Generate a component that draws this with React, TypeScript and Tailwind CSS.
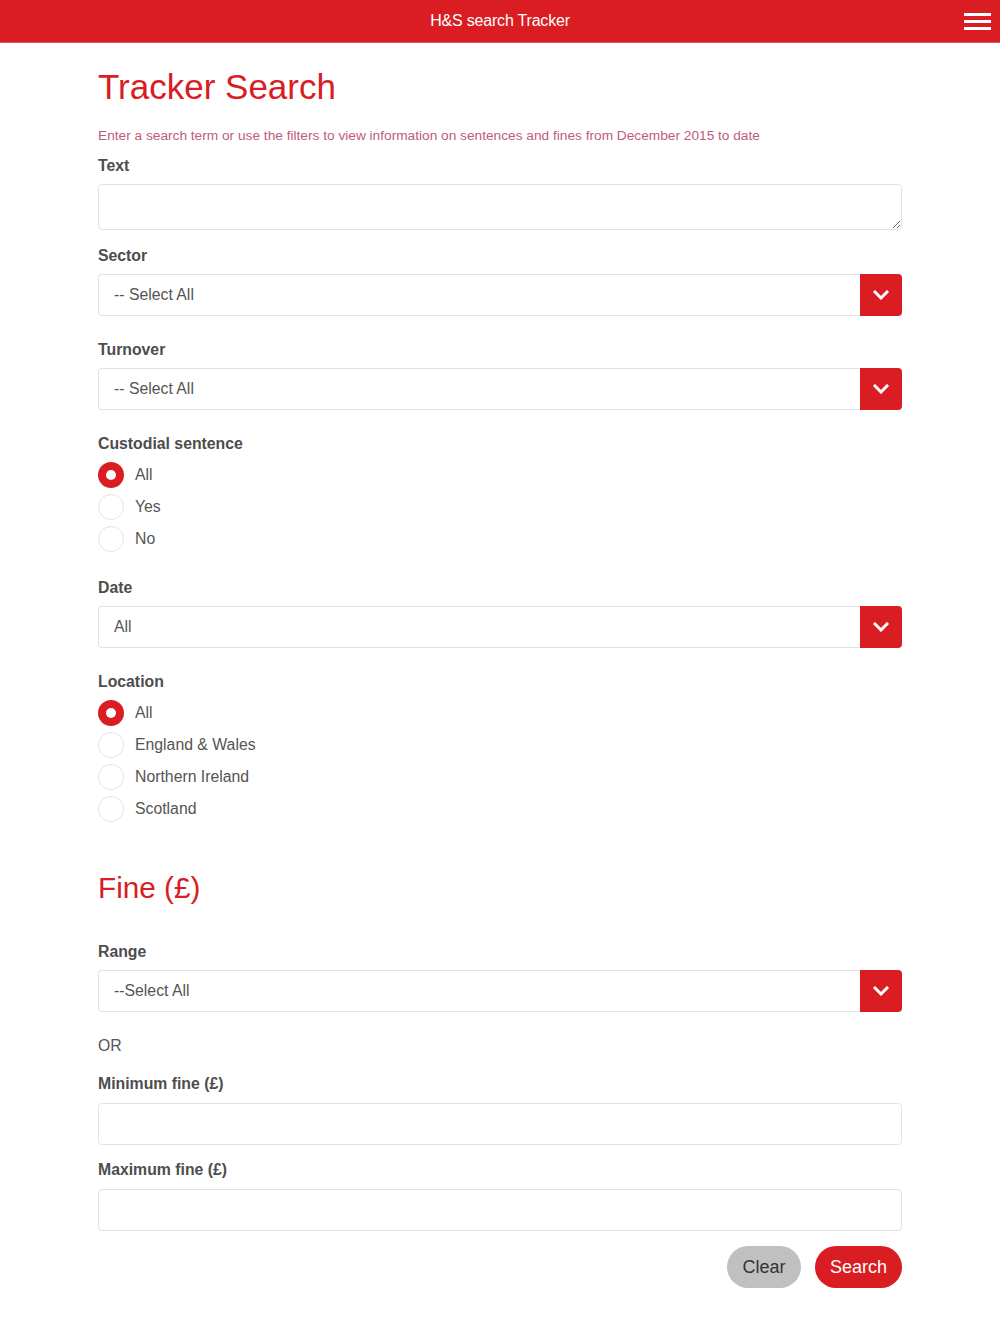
import { useState } from "react";

const RED = "bg-[#da1c23]";

function Label({ children, className = "" }: { children: React.ReactNode; className?: string }) {
  return (
    <div className={`text-[15.8px] leading-[20px] font-bold text-[#4d4d4d] ${className}`}>
      {children}
    </div>
  );
}

function SelectBox({ value }: { value: string }) {
  return (
    <div className="flex h-[42px] mt-[8px]">
      <div className="flex-1 flex items-center pl-[15px] border border-[#e3e3e3] border-r-0 rounded-l-[4px] text-[15.8px] text-[#555]">
        {value}
      </div>
      <div className={`w-[42px] ${RED} rounded-r-[4px] flex items-center justify-center`}>
        <svg width="16" height="10" viewBox="0 0 16 10" fill="none">
          <path d="M2 2l6 6 6-6" stroke="white" strokeWidth="3" strokeLinecap="square" />
        </svg>
      </div>
    </div>
  );
}

function Radio({ label, checked, onClick }: { label: string; checked: boolean; onClick: () => void }) {
  return (
    <button onClick={onClick} className="flex items-center h-[26px] text-left">
      {checked ? (
        <span className="w-[26px] h-[26px] rounded-full bg-[#da1c23] flex items-center justify-center">
          <span className="w-[10px] h-[10px] rounded-full bg-white" />
        </span>
      ) : (
        <span className="w-[26px] h-[26px] rounded-full border border-[#e3e3e3] bg-white" />
      )}
      <span className="ml-[11px] text-[15.8px] text-[#555]">{label}</span>
    </button>
  );
}

function RadioGroup({ options }: { options: string[] }) {
  const [sel, setSel] = useState(options[0]);
  return (
    <div className="flex flex-col gap-[6px] mt-[8px]">
      {options.map((o) => (
        <Radio key={o} label={o} checked={sel === o} onClick={() => setSel(o)} />
      ))}
    </div>
  );
}

export default function App() {
  return (
    <div className="min-h-[1334px] bg-white font-['Liberation_Sans',Arial,sans-serif]">
      <header className={`relative h-[43px] ${RED} border-b border-[#e6555b] flex items-center justify-center`}>
        <span className="text-white text-[16px] tracking-[-0.2px]">H&amp;S search Tracker</span>
        <div className="absolute right-[9px] top-[13px] flex flex-col gap-[4px]">
          <span className="block w-[27px] h-[3px] bg-white" />
          <span className="block w-[27px] h-[3px] bg-white" />
          <span className="block w-[27px] h-[3px] bg-white" />
        </div>
      </header>

      <main className="w-[804px] mx-auto">
        <h1 className="mt-[22px] text-[35px] leading-[44px] text-[#da1c23]">Tracker Search</h1>
        <p className="mt-[17px] text-[13.7px] leading-[20px] text-[#bf5b7e]">
          Enter a search term or use the filters to view information on sentences and fines from December 2015 to date
        </p>

        <Label className="mt-[10px]">Text</Label>
        <textarea className="block w-full h-[46px] mt-[8px] border border-[#e3e3e3] rounded-[4px] resize-y outline-none px-[15px]" />

        <Label className="mt-[16px]">Sector</Label>
        <SelectBox value="-- Select All" />

        <Label className="mt-[24px]">Turnover</Label>
        <SelectBox value="-- Select All" />

        <Label className="mt-[24px]">Custodial sentence</Label>
        <RadioGroup options={["All", "Yes", "No"]} />

        <Label className="mt-[26px]">Date</Label>
        <SelectBox value="All" />

        <Label className="mt-[24px]">Location</Label>
        <RadioGroup options={["All", "England & Wales", "Northern Ireland", "Scotland"]} />

        <h2 className="mt-[48px] text-[29.7px] leading-[36px] text-[#da1c23]">Fine (£)</h2>

        <Label className="mt-[36px]">Range</Label>
        <SelectBox value="--Select All" />

        <div className="mt-[24px] text-[15.8px] leading-[20px] text-[#555]">OR</div>

        <Label className="mt-[18px]">Minimum fine (£)</Label>
        <input className="block w-full h-[42px] mt-[9px] border border-[#e3e3e3] rounded-[4px] outline-none px-[15px]" />

        <Label className="mt-[15px]">Maximum fine (£)</Label>
        <input className="block w-full h-[42px] mt-[9px] border border-[#e3e3e3] rounded-[4px] outline-none px-[15px]" />

        <div className="flex justify-end gap-[14px] mt-[15px]">
          <button className="h-[42px] w-[74px] rounded-full bg-[#c0c0c0] text-[#333] text-[18px]">Clear</button>
          <button className={`h-[42px] w-[87px] rounded-full ${RED} text-white text-[18px]`}>Search</button>
        </div>
      </main>
    </div>
  );
}
